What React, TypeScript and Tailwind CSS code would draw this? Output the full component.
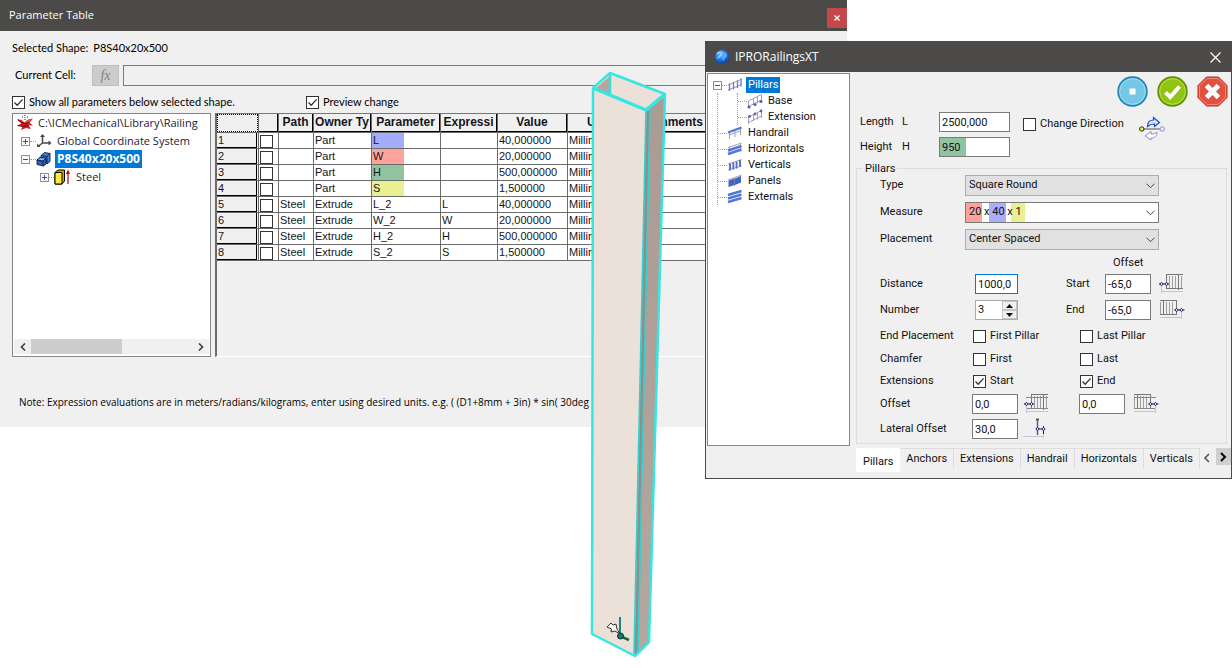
import React, { useState } from 'react';

const UI_FONT = "font-['Roboto','Liberation_Sans',sans-serif]";
const DIALOG_FONT = "font-['Lato','Liberation_Sans',sans-serif]";
const SEGOE_FONT = "font-['Open_Sans','Noto_Sans',sans-serif]";
const GRID_FONT = "font-['Liberation_Sans',Arial,sans-serif]";

const PARAMETERS = [
  { path: '', owner: 'Part', name: 'L', color: 'bg-[#a3adfb]', expr: '', value: '40,000000' },
  { path: '', owner: 'Part', name: 'W', color: 'bg-[#fda49a]', expr: '', value: '20,000000' },
  { path: '', owner: 'Part', name: 'H', color: 'bg-[#92c3a0]', expr: '', value: '500,000000' },
  { path: '', owner: 'Part', name: 'S', color: 'bg-[#e9f091]', expr: '', value: '1,500000' },
  { path: 'Steel', owner: 'Extrude', name: 'L_2', color: '', expr: 'L', value: '40,000000' },
  { path: 'Steel', owner: 'Extrude', name: 'W_2', color: '', expr: 'W', value: '20,000000' },
  { path: 'Steel', owner: 'Extrude', name: 'H_2', color: '', expr: 'H', value: '500,000000' },
  { path: 'Steel', owner: 'Extrude', name: 'S_2', color: '', expr: 'S', value: '1,500000' },
];

const COLUMNS = ['Path', 'Owner Ty', 'Parameter', 'Expressi', 'Value', 'Units', 'Comments'];

const TABS = ['Pillars', 'Anchors', 'Extensions', 'Handrail', 'Horizontals', 'Verticals'];

function Check({ label, checked = false }: { label: string; checked?: boolean }) {
  return (
    <label className="flex items-center gap-1 whitespace-nowrap">
      <span className="relative flex">
        <input
          type="checkbox"
          defaultChecked={checked}
          className="peer size-[13px] appearance-none border border-[#333] bg-white"
        />
        <svg viewBox="0 0 13 13" className="pointer-events-none absolute inset-0 hidden size-[13px] peer-checked:block">
          <path d="M2.5 6.5 5.2 9.3 10.6 3.4" fill="none" stroke="#333" strokeWidth="1.3" />
        </svg>
      </span>
      {label}
    </label>
  );
}

function Expander({ open = false }: { open?: boolean }) {
  return (
    <svg viewBox="0 0 9 9" className="size-[9px] shrink-0">
      <rect x="0.5" y="0.5" width="8" height="8" fill="#fafafa" stroke="#919191" />
      <path d={open ? 'M2 4.5h5' : 'M2 4.5h5M4.5 2v5'} stroke="#3b4fa0" />
    </svg>
  );
}

/* ---------- Parameter Table ---------- */

function LibraryIcon() {
  return (
    <svg viewBox="0 0 18 16" className="h-4 w-[18px] shrink-0">
      <path d="M1 4l4.500 1L8.500 7.500 12 4.500 17 3.500l-3.500 4 3.500 3-4.500-.500L15 14l-5-1-5 2 1.500-3.500L1.500 10.500 5.500 8.500z" fill="#e0151d" />
      <path d="M2 5l4 3 3 1 4-2M1.500 10.500l6 1 5-1" fill="none" stroke="#5d0a0c" />
      <path d="M10.500 7.500l4-3" stroke="#ff7a6e" />
      <path d="M9 0v1M9 2v1M6 2h1M11 2h1M9 4v1" stroke="#222" />
    </svg>
  );
}

function AxesIcon() {
  return (
    <svg viewBox="0 0 16 16" className="size-4 shrink-0" fill="none" stroke="#4a4a4a" strokeWidth="1.5">
      <path d="M6.500 10V3M6.500 10H13M6.500 10 2.500 13" />
      <path d="M4 4 6.500 1 9 4zM12.500 7.500l3 2.500-3 2.500zM1 10.500V14h3.500z" fill="#4a4a4a" stroke="none" />
    </svg>
  );
}

function PartIcon() {
  return (
    <svg viewBox="0 0 16 16" className="size-4 shrink-0" stroke="#0b1c3c" strokeWidth="0.9" strokeLinejoin="round">
      <path d="M1 9 4 6.500l6 .5v6L7.500 15 1 13.500z" fill="#2a62c4" />
      <path d="M5 4.500 8.500 1.500 14 2.500v8L11 13l-1-5-5-1z" fill="#3f7fe0" />
      <path d="M5 4.500 11 5.500 14 2.500M11 5.500V13M1 9l6 1v5" fill="none" />
      <path d="M1 9 4 6.500l6 .5L7 10z" fill="#80b0f5" />
    </svg>
  );
}

function ExtrudeIcon() {
  return (
    <svg viewBox="0 0 16 18" className="h-[18px] w-4 shrink-0">
      <path d="M1 4.500 4 2h6.500v11L8 16H1z" fill="#c9a800" stroke="#000" />
      <path d="M1 4.500h7V16H1z" fill="#ffe83a" stroke="#000" />
      <path d="M14 16V4" stroke="#c00" strokeWidth="1.200" />
      <path d="M12 6 14 1.500 16 6z" fill="#c00" />
    </svg>
  );
}

function ModelTree() {
  return (
    <div className="flex w-[199px] shrink-0 flex-col border border-[#828790] bg-white">
      <ul className={`flex-1 text-[11px] text-[#1a1a3a] ${SEGOE_FONT}`}>
        <li className="flex h-[18px] items-center gap-1 pl-[3px] whitespace-nowrap">
          <LibraryIcon />
          C:\ICMechanical\Library\Railing
        </li>
        <li className="flex h-[18px] items-center pl-2 whitespace-nowrap">
          <Expander />
          <span className="w-[6px] border-t border-dotted border-gray-400" />
          <AxesIcon />
          <span className="pl-[5px]">Global Coordinate System</span>
        </li>
        <li className="flex h-[18px] items-center pl-2 whitespace-nowrap">
          <Expander open />
          <span className="w-[6px] border-t border-dotted border-gray-400" />
          <PartIcon />
          <span className="ml-[3px] bg-[#0078d7] px-0.5 text-xs leading-[18px] font-bold text-white">P8S40x20x500</span>
        </li>
        <li className="flex h-[18px] items-center pl-[27px] whitespace-nowrap">
          <Expander />
          <span className="w-[5px] border-t border-dotted border-gray-400" />
          <ExtrudeIcon />
          <span className="pl-1.5">Steel</span>
        </li>
      </ul>
      <div className="mx-px mb-0.5 flex h-[15px] items-center bg-[#f0f0f0]">
        <button aria-label="Scroll left" className="flex w-[17px] justify-center">
          <svg viewBox="0 0 8 8" className="size-2"><path d="M6 .5 2.500 4 6 7.500" fill="none" stroke="#444" strokeWidth="1.700" /></svg>
        </button>
        <div className="h-full w-[91px] bg-[#cdcdcd]" />
        <button aria-label="Scroll right" className="ml-auto flex w-[17px] justify-center">
          <svg viewBox="0 0 8 8" className="size-2"><path d="M2 .5 5.500 4 2 7.500" fill="none" stroke="#444" strokeWidth="1.700" /></svg>
        </button>
      </div>
    </div>
  );
}

function ParameterGrid() {
  const cell = 'h-4 border-r border-b border-[#6b6b6b] p-0 pl-px overflow-hidden align-top';
  return (
    <div className="min-w-0 flex-1 overflow-hidden border-t border-b border-l-2 border-t-[#777] border-b-white border-l-[#6b6b6b]">
      <table className={`w-[491px] table-fixed border-separate border-spacing-0 bg-white text-[11px] leading-[14px] text-[#151520] ${GRID_FONT}`}>
        <colgroup>
          <col className="w-[42px]" />
          <col className="w-5" />
          <col className="w-[35px]" />
          <col className="w-[58px]" />
          <col className="w-[69px]" />
          <col className="w-[57px]" />
          <col className="w-[70px]" />
          <col className="w-[70px]" />
          <col className="w-[70px]" />
        </colgroup>
        <thead>
          <tr className="bg-[#f0f0f0] text-xs leading-4">
            <th className="h-[19px] border-r border-b border-[#6b6b6b] p-0">
              <div className="h-[18px] border border-dotted border-black" />
            </th>
            <th className="border-r border-b border-[#6b6b6b] p-0">
              <div className="h-[18px] border-r border-b border-black" />
            </th>
            {COLUMNS.map((c) => (
              <th key={c} className="border-r border-b border-[#6b6b6b] p-0">
                <div className="h-[18px] overflow-hidden border-r border-b border-black whitespace-nowrap">{c}</div>
              </th>
            ))}
          </tr>
        </thead>
        <tbody>
          {PARAMETERS.map((p, i) => (
            <tr key={p.name} className="whitespace-nowrap">
              <td className="h-4 border-r border-b border-[#6b6b6b] bg-[#f0f0f0] p-0">
                <div className="mr-px h-[15px] border-r border-b border-black pl-px">{i + 1}</div>
              </td>
              <td className="border-r border-b border-[#6b6b6b] p-0">
                <input
                  type="checkbox"
                  aria-label={`Select ${p.name}`}
                  className="mt-px ml-px block size-[13px] appearance-none border border-[#333] bg-white"
                />
              </td>
              <td className={cell}>{p.path}</td>
              <td className={cell}>{p.owner}</td>
              <td className="h-4 border-r border-b border-[#6b6b6b] p-0">
                <div className={`h-[15px] w-8 pl-px ${p.color}`}>{p.name}</div>
              </td>
              <td className={cell}>{p.expr}</td>
              <td className={cell}>{p.value}</td>
              <td className={cell}>Millimeters</td>
              <td className={cell}></td>
            </tr>
          ))}
        </tbody>
      </table>
    </div>
  );
}

function ParameterWindow() {
  return (
    <section className={`absolute top-0 right-[385px] left-0 overflow-hidden bg-[#f0f0f0] text-[11px] text-black ${DIALOG_FONT}`}>
      <header className={`flex h-[31px] items-center justify-between bg-[#4b4a48] pl-[9px] text-white ${SEGOE_FONT}`}>
        <h1>Parameter Table</h1>
        <button aria-label="Close" className="mt-1 flex size-5 items-center justify-center bg-[#c4474c]">
          <svg viewBox="0 0 8 8" className="size-2"><path d="M1.500 1.500l5 5M6.500 1.500l-5 5" stroke="#fff" strokeWidth="1.300" /></svg>
        </button>
      </header>
      <div className="px-3 pt-2 pb-[15px]">
        <p className="flex gap-[5px] leading-[18px]">
          <span>Selected Shape:</span>
          <span>P8S40x20x500</span>
        </p>
        <div className="mt-2 flex h-[21px] items-center pl-[3px]">
          <label htmlFor="current-cell" className="w-[77px]">Current Cell:</label>
          <button className="h-full w-[27px] border border-[#bfbfbf] bg-[#cccccc] font-['Liberation_Serif',serif] text-sm leading-4 text-[#838383] italic">
            fx
          </button>
          <input id="current-cell" className="ml-1 h-full flex-1 border border-[#7a7a7a] bg-[#f0f0f0] px-1" />
        </div>
        <div className="mt-2 flex h-4 items-center">
          <div className="w-[294px]">
            <Check label="Show all parameters below selected shape." checked />
          </div>
          <Check label="Preview change" checked />
        </div>
        <div className="mt-[3px] flex h-[244px] gap-1">
          <ModelTree />
          <ParameterGrid />
        </div>
        <p className={`mt-[35px] pl-[7px] text-[10px] leading-5 whitespace-nowrap ${SEGOE_FONT}`}>
          Note: Expression evaluations are in meters/radians/kilograms, enter using desired units. e.g. ( (D1+8mm + 3in) * sin( 30deg
        </p>
      </div>
    </section>
  );
}

/* ---------- 3D preview of the tube ---------- */

function Beam() {
  return (
    <svg viewBox="588 68 80 592" className="absolute top-[68px] left-[588px] h-[592px] w-20" strokeLinejoin="round">
      <defs>
        <linearGradient id="side" x1="0" x2="0" y1="0" y2="1">
          <stop offset="0" stopColor="#ab9b93" />
          <stop offset="1" stopColor="#b5a69e" />
        </linearGradient>
      </defs>
      <path d="M593 88 610 73 665 94 660 300 649 642 635 656 592 634z" fill="#ebe1d8" />
      <path d="M646 110 665 94 649 642 635 656z" fill="url(#side)" />
      <path d="M596 88 610 76V94z" fill="#b5a59c" />
      <path d="M610 74V94" stroke="#35e0dc" strokeWidth="2.500" />
      <path d="M648 111 636 654" stroke="#8c8f8e" strokeWidth="3" />
      <path d="M646 110 634 655M650 109 638 652" stroke="#35cfcd" strokeWidth="1.600" />
      <path d="M593 88 646 110 665 94" fill="none" stroke="#35e6e2" strokeWidth="3.500" />
      <path d="M593 88 610 73 665 94 649 642 635 656 592 634z" fill="none" stroke="#35e6e2" strokeWidth="2.500" />
      <path d="M620 617V635" stroke="#0c7a72" strokeWidth="1.800" />
      <path d="M620 636l9 4" stroke="#1a6b3c" strokeWidth="2.500" />
      <circle cx="620.500" cy="636" r="3" fill="#15796d" stroke="#0a3330" />
      <path d="M607 627l4-4 2 2 3-1 1 5 3 5-5-3-4 1 .5-3z" fill="#f4f4f4" stroke="#222" strokeWidth="0.900" />
    </svg>
  );
}

/* ---------- IPRORailingsXT ---------- */

const FRAME = 'M1.500 8V15M6.500 5V12M10.500 3.500V10.500M14.500 1.500V9M1.500 8 14.500 1.500M1.500 13.500 14.500 7';

function RailIcon({ kind }: { kind: string }) {
  return (
    <svg viewBox="0 0 16 16" className="size-4 shrink-0" fill="none">
      {kind === 'Pillars' && (
        <>
          <path d="M1 8 15 2M1 13 15 7.500" stroke="#9b9ba5" />
          <path d="M2.500 6.500V14M6.500 5V12.500M10.500 3.500V11M14 1.500V9.500" stroke="#6f80cf" strokeWidth="1.400" />
        </>
      )}
      {(kind === 'Base' || kind === 'Extension') && (
        <>
          <path d={FRAME} stroke="#a2a2b0" />
          {kind === 'Base' ? (
            <g fill="#5163c6"><circle cx="2" cy="14" r="1.600" /><circle cx="8" cy="11.500" r="1.600" /><circle cx="14" cy="8.500" r="1.600" /></g>
          ) : (
            <g fill="#5163c6"><circle cx="2.500" cy="7.500" r="1.400" /><circle cx="8" cy="5" r="1.400" /><circle cx="14" cy="2" r="1.400" /></g>
          )}
        </>
      )}
      {kind === 'Handrail' && (
        <>
          <path d="M2.500 8V14M8 6V12M13.500 4V10M2 10 14 5.500" stroke="#a2a2aa" />
          <path d="M1 7.500 14.500 2.500" stroke="#4d78d8" strokeWidth="2" />
        </>
      )}
      {kind === 'Horizontals' && (
        <>
          <path d="M2.500 6V14M13.500 3V10" stroke="#a2a2aa" />
          <path d="M1 6.500 14.500 2" stroke="#a2a2aa" />
          <path d="M1 9.500 14.500 5M1 13 14.500 8.500" stroke="#5377d9" strokeWidth="2.600" />
        </>
      )}
      {kind === 'Verticals' && (
        <>
          <path d="M1 7 14.500 2.500M1 13 14.500 9" stroke="#a2a2aa" />
          <path d="M3 6.500V13.500M6.300 5.500V12.500M9.600 4.500V11.500M13 3V10" stroke="#5b72cd" strokeWidth="2" />
        </>
      )}
      {kind === 'Panels' && (
        <>
          <path d="M1 7 14.500 2M7.500 5V13" stroke="#a2a2aa" />
          <path d="M1.500 7.500 7.500 5.500V12L1.500 14zM8 5.500 14 3V9.500L8 12z" fill="#3e66c4" />
        </>
      )}
      {kind === 'Externals' && (
        <path d="M1 6 14.500 2M1 9.500 14.500 5.500M1 13 14.500 9" stroke="#5377d9" strokeWidth="2.600" />
      )}
    </svg>
  );
}

function RailingTree() {
  return (
    <nav className="mt-px mb-8 ml-px w-[143px] shrink-0 border border-[#828790] bg-white pt-[3px]">
      <div className="flex h-4 items-center pl-[5px]">
        <Expander open />
        <span className="w-[5px] border-t border-dotted border-gray-400" />
        <RailIcon kind="Pillars" />
        <a href="#pillars" className="ml-[3px] bg-[#0078d7] px-0.5 leading-4 text-white">Pillars</a>
      </div>
      <ul className="ml-[9px] border-l border-dotted border-gray-400">
        <li className="ml-[19px] border-l border-dotted border-gray-400">
          {['Base', 'Extension'].map((name) => (
            <div key={name} className="flex h-4 items-center">
              <span className="w-[9px] border-t border-dotted border-gray-400" />
              <RailIcon kind={name} />
              <a href={`#${name}`} className="pl-[5px]">{name}</a>
            </div>
          ))}
        </li>
        {['Handrail', 'Horizontals', 'Verticals', 'Panels', 'Externals'].map((name) => (
          <li key={name} className="flex h-4 items-center">
            <span className="w-[9px] border-t border-dotted border-gray-400" />
            <RailIcon kind={name} />
            <a href={`#${name}`} className="pl-[5px]">{name}</a>
          </li>
        ))}
      </ul>
    </nav>
  );
}

function GlobeIcon() {
  return (
    <svg viewBox="0 0 16 16" className="size-4">
      <defs>
        <radialGradient id="globe" cx="0.400" cy="0.300" r="0.750">
          <stop offset="0" stopColor="#7cc6ff" />
          <stop offset="0.500" stopColor="#2476e0" />
          <stop offset="1" stopColor="#0a3aa0" />
        </radialGradient>
      </defs>
      <circle cx="8" cy="8" r="7" fill="url(#globe)" />
      <path d="M3 5c2-2.500 5-2.500 5-.500S5 7 3.500 9.500" fill="none" stroke="#9bd4ff" strokeWidth="1.200" />
      <path d="M10 3c2 1 3 2 3 4l-4 5-1-4z" fill="#5aa8f5" />
    </svg>
  );
}

function DirectionIcon() {
  return (
    <svg viewBox="0 0 26 26" className="size-[26px]">
      <path d="M4 13H22" stroke="#555" />
      <circle cx="2.800" cy="13" r="2.200" fill="#eef25a" stroke="#222" />
      <circle cx="23.200" cy="13" r="2.200" fill="#f2f2ff" stroke="#8a8ad0" />
      <path d="M8.500 10.500c0-5 2.500-6.500 6-6.500V1.500l6 5-5 4V8c-3 0-5 .500-7 2.500z" fill="#cfe2ff" stroke="#1f4bbd" strokeWidth="1.200" />
      <path d="M18 16c0 4-2 6-6 6v2l-6-4 6-4.500V18c3 0 4.500-.500 6-2z" fill="#fff" stroke="#8d8dc9" />
    </svg>
  );
}

// Small diagrams beside the offset boxes; the arrows sit on the side that moves.
function OffsetIcon({ side, rails = false }: { side: 'start' | 'end'; rails?: boolean }) {
  const start = side === 'start';
  return (
    <svg viewBox="0 0 26 22" className="h-[22px] w-[26px]" fill="none">
      <path d={start ? 'M7.500 1V15M19.500 1V17' : 'M4.500 1V15M17.500 1V15'} stroke="#777" />
      <path d={start ? 'M10.500 3V15M13.500 3V15M16.500 3V15M22.500 3V15' : 'M1.500 3V15M7.500 3V15M10.500 3V15M13.500 3V15'} stroke="#a0a0a0" />
      <path d={start ? 'M7 1.500H24M7 15.500H24' : 'M1 1.500H18M1 15.500H18'} stroke="#777" />
      {rails && <path d={start ? 'M2 4.500H24M2 15.500H24' : 'M1 4.500H23M1 15.500H23'} stroke="#888" />}
      <path d={start ? 'M2.500 12V20M2 18.500H24' : 'M22.500 12V20M1 18.500H22'} stroke="#c4c4d8" />
      <path d={start ? 'M0 11H10' : 'M15.500 11H25.500'} stroke="#1c1c5a" />
      <path
        d={start ? 'M.800 11 2.500 9.300 4.200 11 2.500 12.700zM5.800 11 7.500 9.300 9.200 11 7.500 12.700z' : 'M15.800 11 17.500 9.300 19.200 11 17.500 12.700zM20.800 11 22.500 9.300 24.200 11 22.500 12.700z'}
        fill="#dfe2ff"
        stroke="#1c1c5a"
      />
    </svg>
  );
}

function LateralIcon() {
  return (
    <svg viewBox="0 0 26 22" className="h-[22px] w-[26px]" fill="none">
      <path d="M15.500 1V17" stroke="#666" strokeWidth="1.500" />
      <path d="M14 1.500H17" stroke="#555" strokeWidth="2" />
      <path d="M1 18.500H22M21.500 14V20" stroke="#c4c4d8" />
      <path d="M14 11H23M21.500 8V16" stroke="#1c1c5a" />
      <path d="M13.800 11 15.500 9.300 17.200 11 15.500 12.700zM19.800 11 21.500 9.300 23.200 11 21.500 12.700z" fill="#dfe2ff" stroke="#1c1c5a" />
    </svg>
  );
}

function Field({ label, value, className }: { label: string; value: string; className: string }) {
  return <input aria-label={label} defaultValue={value} className={`h-5 border border-[#7a7a7a] bg-white pl-0.5 ${className}`} />;
}

function Picker({ id, value, marked = false }: { id: string; value: string; marked?: boolean }) {
  return (
    <div className={`relative w-[194px] ${marked ? 'bg-white' : 'bg-[#e1e1e1]'}`}>
      {marked && (
        <>
          <span className="absolute inset-y-px left-px w-4 bg-[#fda49a]" />
          <span className="absolute inset-y-px left-6 w-[17px] bg-[#adadfd]" />
          <span className="absolute inset-y-px left-[46px] w-3.5 bg-[#e9f091]" />
        </>
      )}
      <select
        id={id}
        defaultValue={value}
        className={`relative block h-[21px] w-full appearance-none border bg-transparent pl-[3px] ${marked ? 'border-[#7a7a7a]' : 'border-[#adadad]'}`}
      >
        <option>{value}</option>
      </select>
      <svg viewBox="0 0 9 6" className="pointer-events-none absolute top-2 right-1 h-1.5 w-[9px]">
        <path d="M.5 .7 4.500 4.700 8.500 .7" fill="none" stroke="#444" />
      </svg>
    </div>
  );
}

function ActionButtons() {
  return (
    <div className="flex justify-end gap-[9px] pr-[3px]">
      <button aria-label="Stop">
        <svg viewBox="0 0 31 31" className="size-[31px]">
          <circle cx="15.500" cy="15.500" r="14.500" fill="#5bb8dc" stroke="#1c7fae" strokeWidth="1.400" />
          <circle cx="15.500" cy="15.500" r="12.800" fill="#74c7e6" stroke="#a3dcf0" />
          <rect x="12.500" y="12.500" width="6" height="6" fill="#fff" />
        </svg>
      </button>
      <button aria-label="Apply">
        <svg viewBox="0 0 31 31" className="size-[31px]">
          <circle cx="15.500" cy="15.500" r="14.500" fill="#86b90b" stroke="#5f8a00" strokeWidth="1.400" />
          <circle cx="15.500" cy="15.500" r="12.800" fill="#8fc412" stroke="#b9dd5c" />
          <path d="M8.500 16.500 13.200 21 22.500 10.500" fill="none" stroke="#fff" strokeWidth="4" />
        </svg>
      </button>
      <button aria-label="Cancel">
        <svg viewBox="0 0 31 31" className="size-[31px]">
          <path d="M9.500 1h12L30 9.500v12L21.500 30h-12L1 21.500v-12z" fill="#e2503f" stroke="#b83226" />
          <path d="M10 2.500h11L28.500 10v11L21 28.500H10L2.500 21V10z" fill="none" stroke="#f08a7d" />
          <path d="M9.500 9.500l12 12M21.500 9.500l-12 12" stroke="#fff" strokeWidth="5" />
        </svg>
      </button>
    </div>
  );
}

function PillarForm() {
  return (
    <fieldset className="relative mr-1 ml-[6px] border border-[#dcdcdc] pt-[3px] pl-[23px]">
      <legend className="absolute -top-2 left-1.5 bg-[#f0f0f0] px-0.5 leading-4">Pillars</legend>
      <div className="flex h-[27px] items-center">
        <label htmlFor="type" className="w-[85px]">Type</label>
        <Picker id="type" value="Square Round" />
      </div>
      <div className="flex h-[27px] items-center">
        <label htmlFor="measure" className="w-[85px]">Measure</label>
        <Picker id="measure" value="20 x 40 x 1" marked />
      </div>
      <div className="flex h-[27px] items-center">
        <label htmlFor="placement" className="w-[85px]">Placement</label>
        <Picker id="placement" value="Center Spaced" />
      </div>
      <div className="flex h-[18px] items-end pl-[233px]">Offset</div>
      <div className="flex h-[26px] items-center">
        <label htmlFor="distance" className="w-[95px]">Distance</label>
        <div className="w-[91px]">
          <input id="distance" defaultValue="1000,0" className="h-5 w-[43px] border border-[#0078d7] bg-white pl-0.5" />
        </div>
        <span className="w-[39px]">Start</span>
        <Field label="Start" value="-65,0" className="mr-2 w-[46px]" />
        <OffsetIcon side="start" />
      </div>
      <div className="flex h-[26px] items-center">
        <label htmlFor="number" className="w-[95px]">Number</label>
        <div className="w-[91px]">
          <div className="flex h-5 w-[43px] border border-[#ababab] bg-white">
            <input id="number" defaultValue="3" className="w-[26px] pl-0.5" />
            <div className="flex flex-1 flex-col">
              <button aria-label="Increase" className="flex flex-1 items-center justify-center border border-[#c4c4c4] bg-[#f0f0f0]">
                <svg viewBox="0 0 7 4" className="h-1 w-[7px]"><path d="M0 4 3.500 0 7 4z" fill="#111" /></svg>
              </button>
              <button aria-label="Decrease" className="flex flex-1 items-center justify-center border border-[#c4c4c4] bg-[#f0f0f0]">
                <svg viewBox="0 0 7 4" className="h-1 w-[7px]"><path d="M0 0h7L3.500 4z" fill="#111" /></svg>
              </button>
            </div>
          </div>
        </div>
        <span className="w-[39px]">End</span>
        <Field label="End" value="-65,0" className="mr-2 w-[46px]" />
        <OffsetIcon side="end" />
      </div>
      <div className="flex h-[26px] items-center">
        <span className="w-[93px]">End Placement</span>
        <div className="w-[107px]"><Check label="First Pillar" /></div>
        <Check label="Last Pillar" />
      </div>
      <div className="flex h-5 items-center">
        <span className="w-[93px]">Chamfer</span>
        <div className="w-[107px]"><Check label="First" /></div>
        <Check label="Last" />
      </div>
      <div className="flex h-6 items-center">
        <span className="w-[93px]">Extensions</span>
        <div className="w-[107px]"><Check label="Start" checked /></div>
        <Check label="End" checked />
      </div>
      <div className="flex h-[22px] items-center">
        <span className="w-[92px]">Offset</span>
        <div className="flex w-[107px] items-center">
          <Field label="Start offset" value="0,0" className="mr-1.5 w-[46px]" />
          <OffsetIcon side="start" rails />
        </div>
        <Field label="End offset" value="0,0" className="mr-2 w-[46px]" />
        <OffsetIcon side="end" rails />
      </div>
      <div className="flex h-7 items-center">
        <span className="w-[92px]">Lateral Offset</span>
        <Field label="Lateral offset" value="30,0" className="mr-1 w-[46px]" />
        <LateralIcon />
      </div>
    </fieldset>
  );
}

function RailingsWindow() {
  const [tab, setTab] = useState('Pillars');

  return (
    <section className={`absolute top-[41px] right-0 left-[705px] border border-[#4b4a48] bg-[#f0f0f0] text-[11px] text-[#111] ${UI_FONT}`}>
      <header className={`flex h-[30px] items-center bg-[#4b4a48] pr-2.5 pl-2 text-xs text-white ${SEGOE_FONT}`}>
        <GlobeIcon />
        <h2 className="flex-1 pl-[5px]">IPRORailingsXT</h2>
        <button aria-label="Close window">
          <svg viewBox="0 0 11 11" className="size-[11px]"><path d="M.5 .5l10 10M10.500 .5l-10 10" stroke="#fff" strokeWidth="1.200" /></svg>
        </button>
      </header>
      <div className="flex">
        <RailingTree />
        <div className="flex min-w-0 flex-1 flex-col pt-1">
          <ActionButtons />
          <div className="mt-[5px] flex h-[45px] gap-[13px] pl-[10px]">
            <div className="flex flex-col gap-[5px]">
              <div className="flex items-center">
                <span className="w-[42px]">Length</span>
                <label htmlFor="length" className="w-[37px]">L</label>
                <input id="length" defaultValue="2500,000" className="h-5 w-[71px] border border-[#7a7a7a] bg-white pl-0.5" />
              </div>
              <div className="flex items-center">
                <span className="w-[42px]">Height</span>
                <label htmlFor="height" className="w-[37px]">H</label>
                <input
                  id="height"
                  defaultValue="950"
                  className="h-5 w-[71px] border border-[#7a7a7a] bg-white bg-[linear-gradient(#92c3a0,#92c3a0)] bg-[length:26px_100%] bg-no-repeat pl-0.5"
                />
              </div>
            </div>
            <div className="flex h-6 items-center">
              <Check label="Change Direction" />
            </div>
            <div className="pt-1 pl-0.5"><DirectionIcon /></div>
          </div>
          <div className="h-[11px]" />
          <PillarForm />
          <div className="mt-1 flex h-[30px] items-start overflow-hidden pl-1.5">
            {TABS.map((t) => (
              <button
                key={t}
                onClick={() => setTab(t)}
                className={
                  t === tab
                    ? 'h-6 bg-white px-[7px] pt-1 leading-4'
                    : 'h-5 border-t border-r border-[#dcdcdc] px-[6px] leading-5'
                }
              >
                {t}
              </button>
            ))}
            <button aria-label="Previous tabs" className="ml-auto flex h-5 w-4 items-center justify-center">
              <svg viewBox="0 0 8 10" className="h-2.5 w-2"><path d="M6 1 2 5l4 4" fill="none" stroke="#555" strokeWidth="1.600" /></svg>
            </button>
            <button aria-label="Next tabs" className="ml-0.5 flex h-[17px] w-[17px] items-center justify-center bg-[#cfcfcf]">
              <svg viewBox="0 0 8 10" className="h-2.5 w-2"><path d="M2 1l4 4-4 4" fill="none" stroke="#000" strokeWidth="2" /></svg>
            </button>
          </div>
        </div>
      </div>
    </section>
  );
}

export default function App() {
  return (
    <main className="relative min-h-screen overflow-hidden bg-white">
      <ParameterWindow />
      <Beam />
      <RailingsWindow />
    </main>
  );
}
